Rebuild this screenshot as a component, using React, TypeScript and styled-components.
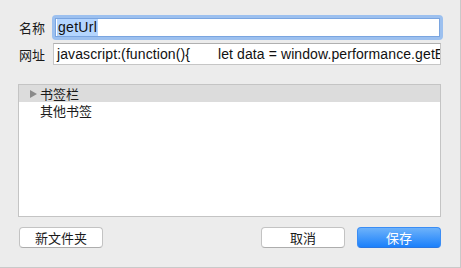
import React from "react";
import styled, { createGlobalStyle } from "styled-components";

const Global = createGlobalStyle`
  html, body { margin: 0; padding: 0; background: #ececec; }
  body { font-family: "Liberation Sans", "Noto Sans CJK SC", sans-serif; }
  * { box-sizing: border-box; }
`;

const Sheet = styled.div`
  width: 461px;
  height: 268px;
  background: #ececec;
  border-right: 1px solid #c9c9c9;
  border-bottom: 1px solid #c9c9c9;
  padding: 15px 19px 0 18px;
  display: flex;
  flex-direction: column;
`;

const Row = styled.div<{ $mt?: number }>`
  display: flex;
  align-items: center;
  margin-top: ${(p) => p.$mt ?? 0}px;
`;

const Label = styled.div`
  width: 34px;
  font-size: 13px;
  color: #1a1a1a;
  padding-left: 1px;
  font-family: "Noto Sans CJK SC", sans-serif;
`;

const FocusRing = styled.div`
  flex: 1;
  height: 25px;
  border-radius: 4px;
  background: #9cc0ef;
  padding: 3px;
  margin-right: -2px;
`;

const NameField = styled.div`
  height: 100%;
  background: #fff;
  border: 1px solid #7aa5e0;
  display: flex;
  align-items: center;
  padding-left: 1px;
  font-size: 14px;
  letter-spacing: 0.3px;
  color: #111;
`;

const Selected = styled.span`
  background: #b4d5fe;
  line-height: 17px;
  padding: 0 1px;
`;

const UrlField = styled.div`
  flex: 1;
  height: 22px;
  margin-left: 1px;
  background: #fff;
  border: 1px solid #c6c6c6;
  border-top-color: #b0b0b0;
  display: flex;
  align-items: center;
  padding-left: 3px;
  font-size: 14px;
  letter-spacing: 0.1px;
  color: #111;
  white-space: pre;
  overflow: hidden;
`;

const List = styled.div`
  margin-top: 19px;
  height: 133px;
  background: #fff;
  border: 1px solid #c4c4c4;
  display: flex;
  flex-direction: column;
`;

const ListRow = styled.div<{ $sel?: boolean }>`
  height: 17px;
  line-height: 17px;
  display: flex;
  align-items: center;
  padding-left: 11px;
  background: ${(p) => (p.$sel ? "#dcdcdc" : "transparent")};
  font-size: 13px;
  color: #1a1a1a;
  font-family: "Noto Sans CJK SC", sans-serif;
`;

const Arrow = styled.span`
  width: 0;
  height: 0;
  border-top: 4px solid transparent;
  border-bottom: 4px solid transparent;
  border-left: 7px solid #8a8a8a;
  margin-right: 3px;
`;

const Spacer = styled.span`
  width: 10px;
`;

const Footer = styled.div`
  margin-top: 10px;
  padding-left: 1px;
  display: flex;
  align-items: center;
`;

const Button = styled.button<{ $primary?: boolean }>`
  width: 84px;
  height: 21px;
  border-radius: 4px;
  font-size: 13px;
  font-family: "Noto Sans CJK SC", sans-serif;
  padding: 0;
  line-height: 19px;
  cursor: default;
  color: ${(p) => (p.$primary ? "#fff" : "#1a1a1a")};
  border: 1px solid ${(p) => (p.$primary ? "#3a8df5" : "#c3c3c3")};
  border-bottom-color: ${(p) => (p.$primary ? "#2a76e0" : "#adadad")};
  background: ${(p) =>
    p.$primary ? "linear-gradient(#6db2fa, #1b80fb)" : "#fff"};
`;

const Grow = styled.div`
  flex: 1;
`;

const Gap = styled.div`
  width: 12px;
`;

export default function App() {
  return (
    <>
      <Global />
      <Sheet>
        <Row>
          <Label>名称</Label>
          <FocusRing>
            <NameField>
              <Selected>getUrl</Selected>
            </NameField>
          </FocusRing>
        </Row>
        <Row $mt={3}>
          <Label>网址</Label>
          <UrlField>{"javascript:(function(){       let data = window.performance.getEntries"}</UrlField>
        </Row>
        <List>
          <ListRow $sel>
            <Arrow />
            书签栏
          </ListRow>
          <ListRow>
            <Spacer />
            其他书签
          </ListRow>
        </List>
        <Footer>
          <Button>新文件夹</Button>
          <Grow />
          <Button>取消</Button>
          <Gap />
          <Button $primary>保存</Button>
        </Footer>
      </Sheet>
    </>
  );
}
